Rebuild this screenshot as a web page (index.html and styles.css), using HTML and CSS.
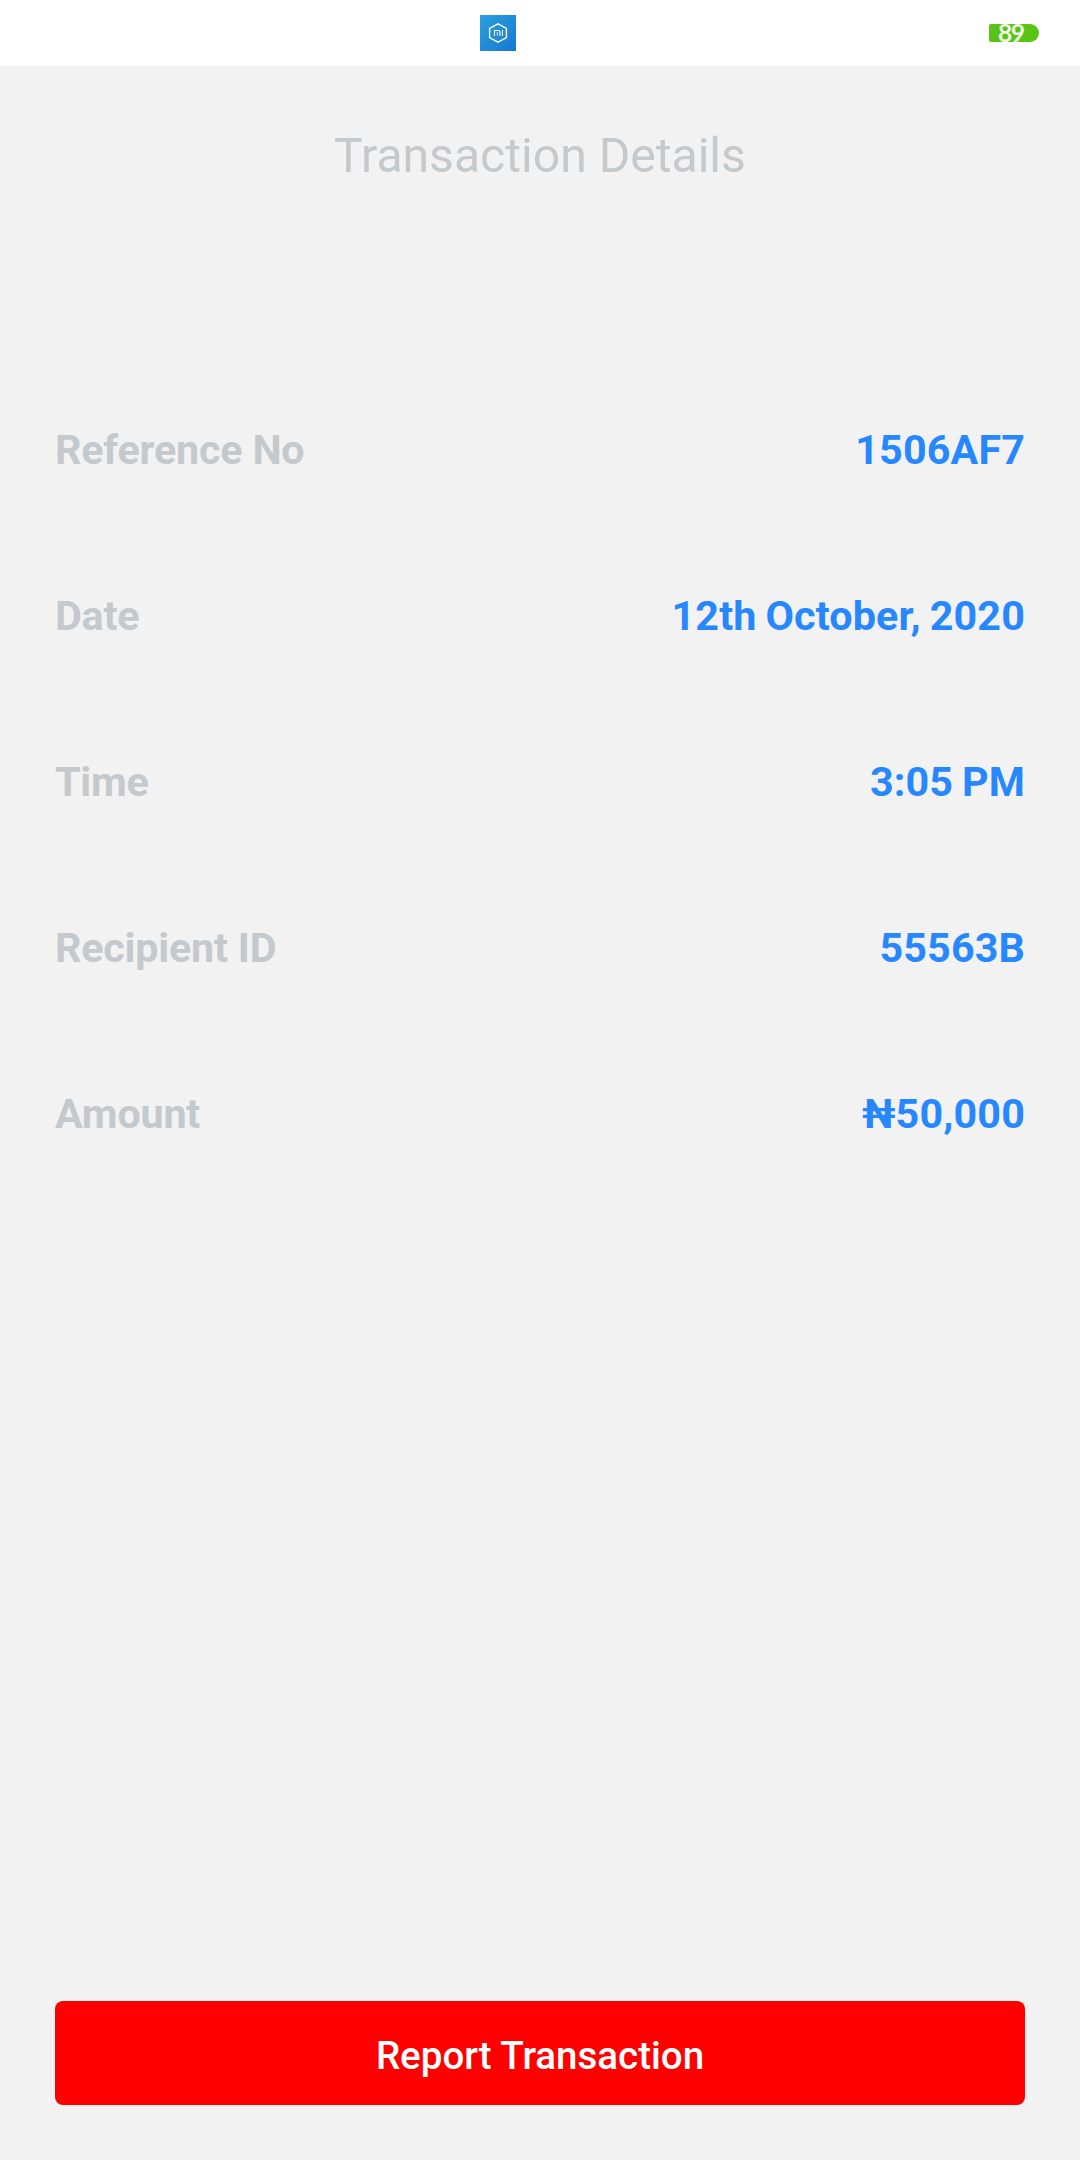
FILE: index.html
```
<!DOCTYPE html>
<html lang="en">
<head>
    <meta charset="UTF-8">
    <meta name="viewport" content="width=device-width, initial-scale=1.0">
    <title>Transaction Details</title>
    <link rel="stylesheet" href="styles.css">
</head>
<body>
    <div class="status-bar">
        <svg class="app-icon" viewBox="0 0 36 36">
            <defs>
                <linearGradient id="blue" x1="0" y1="0" x2="1" y2="1">
                    <stop offset="0" stop-color="#2ba1de"/>
                    <stop offset="1" stop-color="#1678d2"/>
                </linearGradient>
            </defs>
            <rect width="36" height="36" fill="url(#blue)"/>
            <path d="M18 8.8l8.4 4.7v9L18 27.2l-8.4-4.7v-9z" fill="none" stroke="#fff" stroke-width="1.4"/>
            <path d="M14.5 21v-5.5h4q1.5 0 1.5 1.5v4M22.5 21v-6" fill="none" stroke="#fff" stroke-width="1.1"/>
            <path d="M17.3 20.5v-3.2" stroke="#fff" stroke-width=".9"/>
        </svg>
        <div class="battery">89</div>
    </div>

    <div class="screen">
        <h1>Transaction Details</h1>

        <div class="details">
            <div class="row">
                <span class="label">Reference No</span>
                <span class="value">1506AF7</span>
            </div>
            <div class="row">
                <span class="label">Date</span>
                <span class="value">12th October, 2020</span>
            </div>
            <div class="row">
                <span class="label">Time</span>
                <span class="value">3:05 PM</span>
            </div>
            <div class="row">
                <span class="label">Recipient ID</span>
                <span class="value">55563B</span>
            </div>
            <div class="row">
                <span class="label">Amount</span>
                <span class="value">₦50,000</span>
            </div>
        </div>

        <button class="report">Report Transaction</button>
    </div>
</body>
</html>
```
FILE: styles.css
```
body {
    margin: 0;
    height: 2160px;
    display: flex;
    flex-direction: column;
    background-color: #f2f2f2;
    font-family: Roboto, sans-serif;
}
.status-bar {
    display: flex;
    justify-content: space-between;
    align-items: center;
    box-sizing: border-box;
    height: 66px;
    padding: 0 41px 0 480px;
    background-color: #fff;
}
.app-icon {
    width: 36px;
    height: 36px;
}
.battery {
    width: 50px;
    height: 18px;
    box-sizing: border-box;
    padding-left: 9px;
    border-radius: 2px 9px 9px 2px;
    background-color: #58c416;
    color: #eefbe6;
    font: bold 24.5px/18px Lato, sans-serif;
    letter-spacing: -1.5px;
}
.screen {
    flex: 1;
    display: flex;
    flex-direction: column;
    padding: 62px 55px 55px;
}
h1 {
    margin: 0 0 242px;
    color: #c4c9cd;
    font-size: 48.125px;
    font-weight: 400;
    line-height: 56px;
    text-align: center;
}
.details {
    display: flex;
    flex-direction: column;
    gap: 118px;
}
.row {
    display: flex;
    justify-content: space-between;
    font-size: 41.25px;
    font-weight: 700;
    line-height: 48px;
}
.label {
    color: #c4c9cd;
    letter-spacing: -0.2px;
}
.value {
    color: #2787ff;
    letter-spacing: 0.15px;
    word-spacing: -1.5px;
}
.report {
    height: 104px;
    margin-top: auto;
    padding: 4px 0 0;
    border: none;
    border-radius: 8px;
    background-color: #f00;
    color: #fff;
    font-family: inherit;
    font-size: 38.5px;
    font-weight: 500;
}
```
